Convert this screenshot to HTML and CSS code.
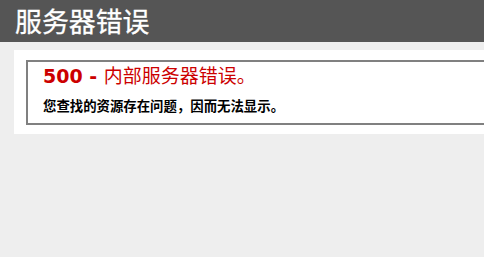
FILE: index.html
```html
<!DOCTYPE html>
<html lang="zh-CN">
<head>
<meta charset="utf-8">
<title>500 - 内部服务器错误。</title>
<link rel="stylesheet" href="styles.css">
</head>
<body>
<div class="header"><h1>服务器错误</h1></div>
<div class="content">
  <div class="content-container">
    <fieldset class="box">
      <h2><span class="code">500 - </span><span class="msg">内部服务器错误。</span></h2>
      <h3>您查找的资源存在问题，因而无法显示。</h3>
    </fieldset>
  </div>
</div>
</body>
</html>
```
FILE: styles.css
```css
html, body {
  margin: 0;
  padding: 0;
}
body {
  font-size: 11.2px;
  font-family: "DejaVu Sans", Verdana, "Noto Sans CJK SC", sans-serif;
  background: #eeeeee;
  overflow: hidden;
}
.header {
  background-color: #555555;
  color: #ffffff;
  padding: 6px 15px;
  height: 30px;
}
.header h1 {
  margin: 0;
  font-size: 26.88px;
  line-height: 30px;
  font-weight: 400;
  font-family: "Noto Sans CJK SC", sans-serif;
  color: #ffffff;
  -webkit-text-stroke: 0.3px #ffffff;
}
.content {
  margin: 0 0 0 14px;
}
.content-container {
  background: #ffffff;
  margin-top: 8px;
  padding: 10px 0 9px 10px;
}
.box {
  margin: 0 0 0 2px;
  padding: 0 15px 10px 15px;
  border-color: #808080;
  border-style: solid;
  border-width: 2px 0 2px 2px;
  min-width: 0;
}
.box h2 {
  margin: 0;
  font-size: 19px;
  line-height: 24px;
  padding-top: 1px;
  color: #cc0000;
}
.code {
  font-family: "DejaVu Sans", Verdana, sans-serif;
  font-weight: 700;
}
.msg {
  font-family: "Noto Sans CJK SC", sans-serif;
  font-weight: 400;
}
.box h3 {
  margin: 9px 0 0 0;
  font-size: 13.4px;
  line-height: 16px;
  font-weight: 700;
  color: #000000;
  font-family: "Noto Sans CJK SC", sans-serif;
}
```
